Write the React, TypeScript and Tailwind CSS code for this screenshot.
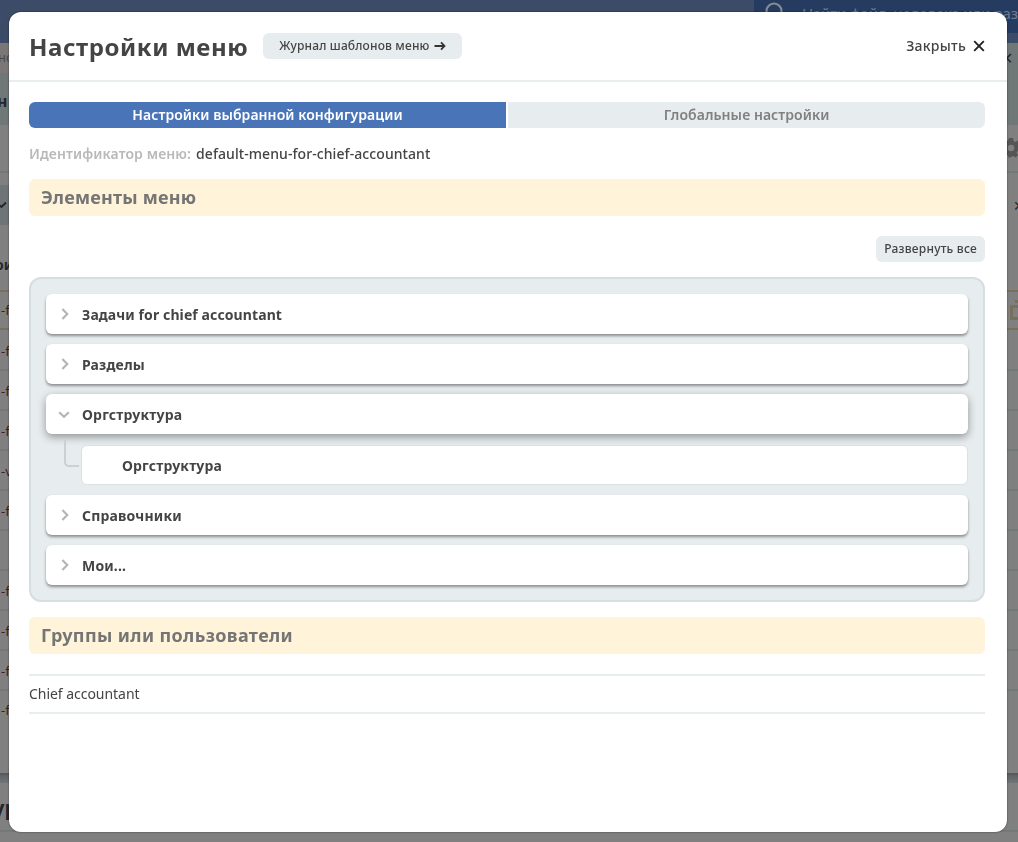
import React from "react";

const menuItems: { title: string; children?: string[] }[] = [
  { title: "Задачи for chief accountant" },
  { title: "Разделы" },
  { title: "Оргструктура", children: ["Оргструктура"] },
  { title: "Справочники" },
  { title: "Мои..." },
];

const pageRows = ["-f", "-f", "-f", "-v", "-f", "", "-f", "-f", "-f"];

function Chevron({ open }: { open: boolean }) {
  return (
    <svg width="12" height="12" viewBox="0 0 12 12" fill="none" stroke="#b5b5b5" strokeWidth="2.2" className="shrink-0">
      {open ? <path d="M1.2 4.2 6 8.8 10.8 4.2" /> : <path d="M4.4 1.1 9.2 6 4.4 10.9" />}
    </svg>
  );
}

function Page() {
  return (
    <div className="flex h-[842px] flex-col overflow-hidden bg-[#808080] text-[13px] text-[#25262a]">
      <div className="flex h-[43px] shrink-0 justify-end bg-[#3c4b67]">
        <div className="flex h-[33px] w-[264px] items-start overflow-hidden whitespace-nowrap bg-[#263b60] pl-[9px]">
          <svg width="24" height="26" viewBox="0 0 24 26" fill="none" stroke="#868b94" strokeWidth="2.2" className="shrink-0">
            <circle cx="11" cy="11" r="7.5" />
            <path d="m16 17 6 6" />
          </svg>
          <span className="ml-[15px] mt-[3px] text-[15px] leading-5 tracking-[-0.22px] text-[#6f7b92]">Найти файл, человека или раздел</span>
        </div>
      </div>
      <div className="flex h-[30px] shrink-0 items-center justify-between bg-[#7b7776]">
        <span className="-ml-0.5 text-[#4c4b4b]">но</span>
        <span className="flex h-full w-[15px] items-center bg-[#707777] text-base">
          <span className="-ml-[3px]">✕</span>
        </span>
      </div>
      <div className="flex h-[52px] shrink-0 items-center bg-[#707777] pt-1 text-base font-bold">
        <span className="-ml-[3px]">н</span>
      </div>
      <div className="flex h-[48px] shrink-0 items-center justify-end border-b-2 border-[#737879]">
        <svg width="20" height="20" viewBox="0 0 20 20" className="-mr-[3px]">
          <g fill="#555">
            <path d="M8 0h4l.6 3 2 .9L17.2 2 20 4.8l-1.9 2.6.9 2V12l-2.4.7-.9 2.1 1.3 2.5-2.4 2.1-2.6-1.4L10 19l-2 1-1.5-3-2.1 1.4L2 16.2l1.2-2.5L2.3 12H0V8l2.9-.8.8-1.7L2 3.4 4.2 1l2.6 1.9z" />
          </g>
          <circle cx="10" cy="10" r="3.2" fill="#808080" />
        </svg>
      </div>
      <div className="h-3 shrink-0" />
      <div className="flex h-10 shrink-0 items-center justify-between bg-[#6f7577]">
        <svg width="8" height="10" viewBox="0 0 8 10" fill="none" stroke="#25262a" strokeWidth="2"><path d="M-2 4 1.5 7 6 2.5" /></svg>
        <span className="flex h-full w-[11px] items-center bg-[#808080] pl-1.5 pt-0.5 text-sm">✕</span>
      </div>
      <div className="flex h-[65px] shrink-0 items-center pt-3.5 text-sm font-bold">
        <span className="-ml-[5px]">ои</span>
      </div>
      <div className="mb-px flex h-10 shrink-0 items-center justify-between border-y-2 border-[#77705c] pl-px">
        <span className="pt-0.5 text-[#3d2022]">-f</span>
        <svg width="8" height="20" viewBox="0 0 8 20" fill="none" stroke="#77705c" strokeWidth="3"><path d="M10 6.5H1.5v12H10M5 1.5h4" /></svg>
      </div>
      {pageRows.map((text, i) => (
        <div key={i} className="flex h-10 shrink-0 items-center border-b-2 border-[#737879] pl-px pt-[3px] text-[#3d2022]">
          {text}
        </div>
      ))}
      <div className="flex h-[84px] shrink-0 items-start border-b-2 border-[#58595a] pl-px pt-2.5 text-[#3d2022]">-f</div>
      <div className="h-2 shrink-0 bg-gradient-to-b from-[#606264] to-[#707577]" />
      <div className="flex h-[49px] shrink-0 items-center border-b-2 border-[#737879] pt-0.5 text-xl font-bold">
        <span className="-ml-[7px]">ур</span>
      </div>
    </div>
  );
}

function SectionTitle({ children }: { children: React.ReactNode }) {
  return (
    <h2 className="flex h-[37px] items-center rounded-md bg-[#fff4d9] px-3 text-[18px] font-bold text-[#757575]">
      {children}
    </h2>
  );
}

function MenuTree() {
  return (
    <div className="mt-[15px] flex flex-col gap-2.5 rounded-xl border-2 border-[#d7dee1] bg-[#e7ecee] p-[15px] tracking-[0.17px]">
      {menuItems.map((item) => (
        <div key={item.title}>
          <div
            className={
              item.children
                ? "flex h-10 items-center rounded-md bg-white pl-[12px] shadow-[0_3px_8px_rgba(0,0,0,0.38)]"
                : "flex h-10 items-center rounded-md bg-white pl-[12px] shadow-[0_2px_3px_rgba(0,0,0,0.4)] first:tracking-normal"
            }
          >
            <Chevron open={!!item.children} />
            <span className={item.title.length > 20 ? "ml-3 pt-0.5 font-bold tracking-[0.1px]" : "ml-3 pt-0.5 font-bold tracking-[0.18px]"}>
              {item.title}
            </span>
          </div>
          {item.children?.map((child) => (
            <div key={child} className="flex pl-[18px]">
              <div className="mr-0.5 mt-1.5 h-[27px] w-[15px] rounded-bl-[5px] border-b-2 border-l-2 border-[#cdcfd0]" />
              <div className="mt-[11px] flex h-10 flex-1 items-center rounded-md border border-[#dce1e4] bg-white pl-10 pt-0.5 font-bold">
                {child}
              </div>
            </div>
          ))}
        </div>
      ))}
    </div>
  );
}

export default function App() {
  return (
    <div className="h-[842px] overflow-hidden font-['Noto_Sans','Open_Sans',sans-serif]">
      <Page />
      <div className="fixed inset-0 flex pb-2.5 pl-[9px] pr-[11px] pt-3">
        <section className="flex-1 rounded-xl bg-white text-sm text-[#444] shadow-[0_0_2px_rgba(0,0,0,0.6)]">
          <header className="flex h-[70px] items-center border-b-2 border-[#e8edf0] pl-5 pr-[22px]">
            <h1 className="pt-0.5 text-2xl font-bold tracking-[0.57px]">Настройки меню</h1>
            <button className="ml-[15px] flex h-[26px] items-center rounded-md bg-[#e7ecee] px-4 text-xs font-medium tracking-[0.16px]">
              Журнал шаблонов меню
              <svg width="12" height="10" viewBox="0 0 12 10" fill="none" stroke="#333" strokeWidth="1.8" className="ml-[5px]">
                <path d="M.5 5h10M7 1.3 10.5 5 7 8.7" />
              </svg>
            </button>
            <button className="ml-auto flex items-center font-medium tracking-[0.26px]">
              Закрыть
              <svg width="12" height="12" viewBox="0 0 12 12" stroke="#222" strokeWidth="1.9" className="ml-[7px]">
                <path d="m1.2 1.2 9.6 9.6m0-9.6-9.6 9.6" />
              </svg>
            </button>
          </header>
          <div className="pl-5 pr-[22px] pt-5">
            <div className="flex h-[26px] gap-0.5 font-semibold tracking-[0.06px]">
              <button className="w-[477px] rounded-l-md bg-[#4a74b8] text-white">Настройки выбранной конфигурации</button>
              <button className="flex-1 rounded-r-md bg-[#e7ecee] text-[#808080]">Глобальные настройки</button>
            </div>
            <div className="flex h-[51px] items-center font-medium">
              <span className="w-[167px] whitespace-nowrap font-semibold tracking-[0.1px] text-[#b9b9b9]">Идентификатор меню:</span>
              <span className="tracking-[0.08px]">default-menu-for-chief-accountant</span>
            </div>
            <SectionTitle>
              <span className="tracking-[0.2px]">Элементы меню</span>
            </SectionTitle>
            <div className="mt-5 flex justify-end">
              <button className="h-[26px] rounded-md bg-[#e7ecee] px-2 text-xs font-medium tracking-[0.21px]">Развернуть все</button>
            </div>
            <MenuTree />
            <div className="mt-[15px]">
              <SectionTitle>
                <span className="tracking-[0.37px]">Группы или пользователи</span>
              </SectionTitle>
            </div>
            <div className="mt-5 flex h-10 items-center border-y-2 border-[#e8edf0] tracking-[-0.04px]">Chief accountant</div>
          </div>
        </section>
      </div>
    </div>
  );
}
